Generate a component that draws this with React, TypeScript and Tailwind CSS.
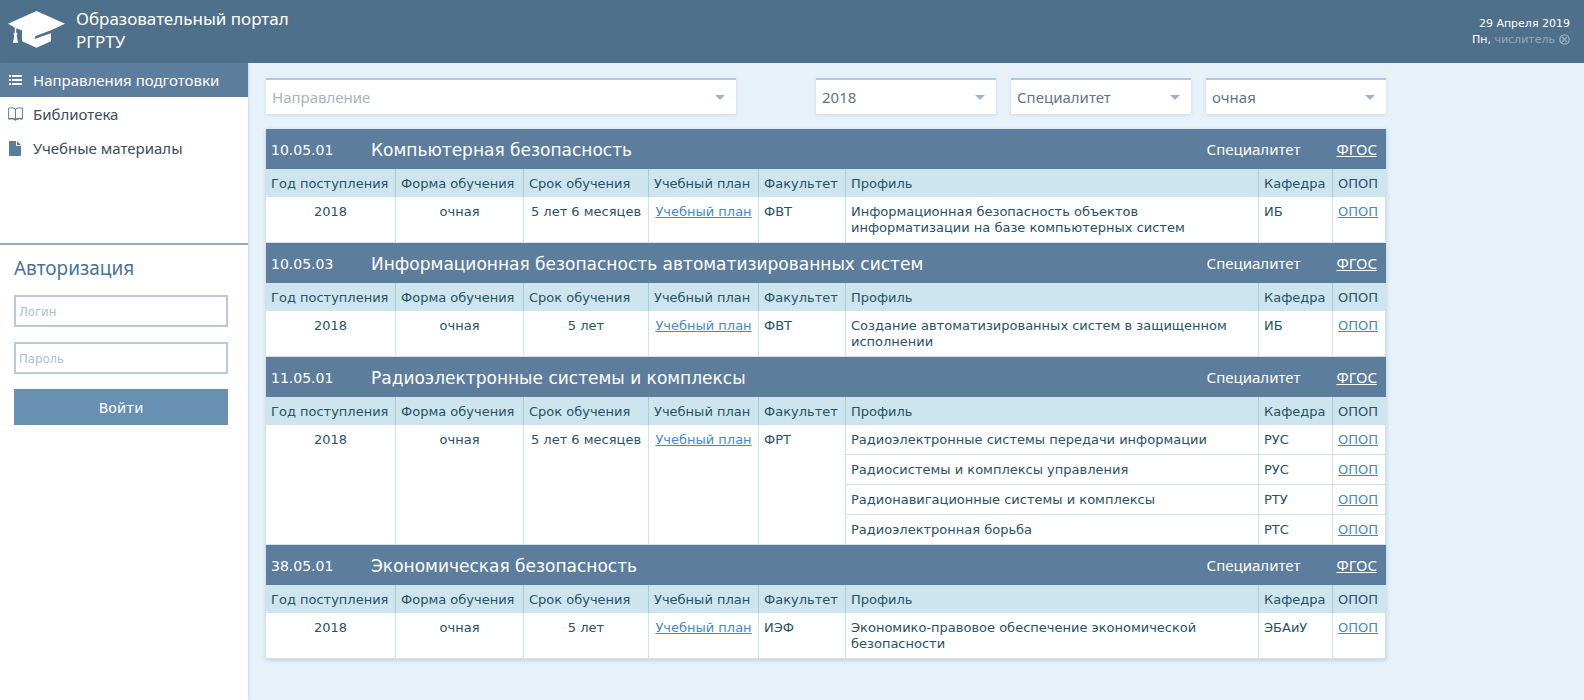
import React from "react";

type Profile = { name: string; dept: string };
type Program = {
  code: string;
  title: string;
  term: string;
  faculty: string;
  profiles: Profile[];
};

const programs: Program[] = [
  {
    code: "10.05.01",
    title: "Компьютерная безопасность",
    term: "5 лет 6 месяцев",
    faculty: "ФВТ",
    profiles: [
      { name: "Информационная безопасность объектов информатизации на базе компьютерных систем", dept: "ИБ" },
    ],
  },
  {
    code: "10.05.03",
    title: "Информационная безопасность автоматизированных систем",
    term: "5 лет",
    faculty: "ФВТ",
    profiles: [{ name: "Создание автоматизированных систем в защищенном исполнении", dept: "ИБ" }],
  },
  {
    code: "11.05.01",
    title: "Радиоэлектронные системы и комплексы",
    term: "5 лет 6 месяцев",
    faculty: "ФРТ",
    profiles: [
      { name: "Радиоэлектронные системы передачи информации", dept: "РУС" },
      { name: "Радиосистемы и комплексы управления", dept: "РУС" },
      { name: "Радионавигационные системы и комплексы", dept: "РТУ" },
      { name: "Радиоэлектронная борьба", dept: "РТС" },
    ],
  },
  {
    code: "38.05.01",
    title: "Экономическая безопасность",
    term: "5 лет",
    faculty: "ИЭФ",
    profiles: [{ name: "Экономико-правовое обеспечение экономической безопасности", dept: "ЭБАиУ" }],
  },
];

const columns = [
  "Год поступления",
  "Форма обучения",
  "Срок обучения",
  "Учебный план",
  "Факультет",
  "Профиль",
  "Кафедра",
  "ОПОП",
];

const cell = "border-r border-b border-[#cfe2e5] px-[5px] pt-[7px] pb-[6px] align-top";
const link = "text-[#3f8bc9] underline";

function CapLogo() {
  return (
    <svg className="h-[37px] w-[57px] shrink-0" viewBox="0 0 57 37" fill="#fff" aria-hidden="true">
      <path d="M28.5 0 57 12.7 43 19.3 27.5 25 26.5 28 43 22.2V30.3L28.5 36.8 14 30.3V19.6L8.2 17.2V18H6.8V16.5L0 12.7Z" />
      <path d="M6.8 17h1.4v4.6l1.4 1.3-.9 2 1.4 6.8H4.900l1.400-6.800-.9-2 1.400-1.300Z" />
    </svg>
  );
}

function ListIcon() {
  return (
    <svg className="h-3 w-4 shrink-0" viewBox="0 0 16 12" fill="#fff" aria-hidden="true">
      <path d="M1 1h2v2H1zM1 5h2v2H1zM1 9h2v2H1zM4 1h10v2H4zM4 5h10v2H4zM4 9h10v2H4z" />
    </svg>
  );
}

function BookIcon() {
  return (
    <svg className="h-[14px] w-4 shrink-0" viewBox="0 0 16 14" fill="none" stroke="#5b7d9d" aria-hidden="true">
      <path d="M7.5 2C5.8.7 3 .5.6 1.2v10.6c2.4-.6 5.2-.4 6.9.9 1.7-1.3 4.5-1.5 6.9-.9V1.2C12 .5 9.2.7 7.5 2Z" />
      <path d="M7.5 2v10.5" />
      <path d="M.6 11.9c2.4-.6 5.2-.4 6.9.9 1.7-1.3 4.5-1.5 6.9-.9" strokeWidth="1.5" />
    </svg>
  );
}

function FileIcon() {
  return (
    <svg className="h-[15px] w-4 shrink-0" viewBox="0 0 16 15" fill="#5b7d9d" aria-hidden="true">
      <path d="M1.5 0H8v5h5v9a1 1 0 0 1-1 1H2a1 1 0 0 1-1-1V.5a.5.5 0 0 1 .5-.5ZM9 0l4 4H9Z" />
    </svg>
  );
}

const menu = [
  { label: "Направления подготовки", icon: <ListIcon />, active: true },
  { label: "Библиотека", icon: <BookIcon />, active: false },
  { label: "Учебные материалы", icon: <FileIcon />, active: false },
];

function Filter({ label, value, className }: { label: string; value: string; className: string }) {
  const muted = label === value;
  return (
    <div className={`relative ${className}`}>
      <select
        aria-label={label}
        defaultValue={value}
        className={`block h-9 w-full appearance-none border-t-2 border-[#b5c8d9] bg-white px-[6px] pt-px pr-8 font-[Noto_Sans,sans-serif] text-[15px] shadow-[0_1px_3px_rgba(90,130,160,0.2)] outline-none ${muted ? "text-[#a9b4bf]" : "text-[#637587]"}`}
      >
        <option value={value}>{value}</option>
      </select>
      <svg className="pointer-events-none absolute top-[17px] right-[11px] h-[5px] w-[10px]" viewBox="0 0 10 5" fill="#9db5c9" aria-hidden="true">
        <path d="M0 0h10L5 5Z" />
      </svg>
    </div>
  );
}

function ProgramSection({ program }: { program: Program }) {
  const span = program.profiles.length;
  return (
    <section>
      <header className="flex h-10 items-center bg-[#5c7d9c] pt-[2px] pr-[9px] pl-[5px] text-sm text-white">
        <span className="w-[100px] shrink-0">{program.code}</span>
        <h2 className="flex-1 text-[17px]">{program.title}</h2>
        <div className="flex gap-9 font-[Noto_Sans,sans-serif] text-[15px]">
          <span>Специалитет</span>
          <a href="#fgos" className="underline">ФГОС</a>
        </div>
      </header>
      <table className="w-full table-fixed border-separate border-spacing-0 text-[13px] leading-4 text-[#285266]">
        <colgroup>
          <col className="w-[130px]" />
          <col className="w-32" />
          <col className="w-[125px]" />
          <col className="w-[110px]" />
          <col className="w-[87px]" />
          <col />
          <col className="w-[74px]" />
          <col className="w-[53px]" />
        </colgroup>
        <thead>
          <tr>
            {columns.map((c) => (
              <th
                key={c}
                scope="col"
                className="border-r border-[#aaccd8] bg-[#cde5ee] px-[5px] pt-[7px] pb-[5px] text-left font-normal whitespace-nowrap last:border-[#cde5ee]"
              >
                {c}
              </th>
            ))}
          </tr>
        </thead>
        <tbody>
          {program.profiles.map((p, i) => (
            <tr key={p.name}>
              {i === 0 && (
                <>
                  <td rowSpan={span} className={`${cell} text-center`}>2018</td>
                  <td rowSpan={span} className={`${cell} text-center`}>очная</td>
                  <td rowSpan={span} className={`${cell} text-center whitespace-nowrap`}>{program.term}</td>
                  <td rowSpan={span} className={`${cell} text-center whitespace-nowrap`}>
                    <a href="#plan" className={link}>Учебный план</a>
                  </td>
                  <td rowSpan={span} className={cell}>{program.faculty}</td>
                </>
              )}
              <td className={cell}>{p.name}</td>
              <td className={cell}>{p.dept}</td>
              <td className={cell}>
                <a href="#opop" className={link}>ОПОП</a>
              </td>
            </tr>
          ))}
        </tbody>
      </table>
    </section>
  );
}

export default function App() {
  const field =
    "h-8 w-full border-2 border-[#b8cad6] bg-white px-[3px] font-[DejaVu_Sans_Condensed,Noto_Sans,sans-serif] text-[13px] text-[#3c5468] outline-none placeholder:text-[#a9c1d4]";
  return (
    <div className="flex min-h-screen flex-col bg-[#e6f1fa] font-[DejaVu_Sans,Verdana,sans-serif]">
      <header className="flex h-[63px] items-center justify-between bg-[#4f708b] pr-[14px] pl-2 text-white">
        <a href="#home" className="flex items-center gap-[11px] pb-1">
          <CapLogo />
          <span className="font-[Noto_Sans,sans-serif] text-[17px] leading-[23px]">
            Образовательный портал
            <br />
            РГРТУ
          </span>
        </a>
        <div className="text-right text-[11px] leading-4">
          <p>29 Апреля 2019</p>
          <p className="flex items-center justify-end">
            Пн,&nbsp;<span className="text-[#8fa9bd]">числитель</span>
            <svg className="ml-1 size-[11px]" viewBox="0 0 11 11" fill="none" stroke="#9ab1c3" strokeWidth="1.3" aria-hidden="true">
              <circle cx="5.5" cy="5.5" r="4.7" />
              <path d="m3 3 5 5m0-5-5 5" />
            </svg>
          </p>
        </div>
      </header>
      <div className="flex flex-1">
        <aside className="w-[248px] shrink-0 bg-white shadow-[0_0_3px_rgba(80,120,150,0.3)]">
          <nav className="h-[182px] border-b-2 border-[#97adbf]">
            {menu.map((m) => (
              <a
                key={m.label}
                href="#menu"
                className={`flex h-[34px] items-center gap-[9px] pl-2 font-[Noto_Sans,sans-serif] text-[15px] whitespace-nowrap ${m.active ? "bg-[#5c7d9c] text-white" : "text-[#3b4d58]"}`}
              >
                {m.icon}
                {m.label}
              </a>
            ))}
          </nav>
          <form className="flex flex-col gap-[15px] pr-5 pl-[14px]" onSubmit={(e) => e.preventDefault()}>
            <h2 className="pt-3 font-[Noto_Sans,sans-serif] text-[19px] leading-[23px] text-[#4b7397]">
              Авторизация
            </h2>
            <input type="text" aria-label="Логин" placeholder="Логин" className={field} />
            <input type="password" aria-label="Пароль" placeholder="Пароль" className={field} />
            <button type="submit" className="h-9 bg-[#6790b2] pt-[2px] text-sm text-white">
              Войти
            </button>
          </form>
        </aside>
        <main className="min-w-0 flex-1 px-[18px] pt-[15px] pb-10">
          <div className="max-w-[1120px]">
            <div className="mb-[15px] flex gap-[15px]">
              <Filter label="Направление" value="Направление" className="max-w-[470px] flex-1" />
              <Filter label="Год поступления" value="2018" className="ml-auto w-[180px]" />
              <Filter label="Уровень" value="Специалитет" className="w-[180px]" />
              <Filter label="Форма обучения" value="очная" className="w-[180px]" />
            </div>
            <div className="bg-white shadow-[0_1px_4px_rgba(80,120,150,0.3)]">
              {programs.map((p) => (
                <ProgramSection key={p.code} program={p} />
              ))}
            </div>
          </div>
        </main>
      </div>
    </div>
  );
}
